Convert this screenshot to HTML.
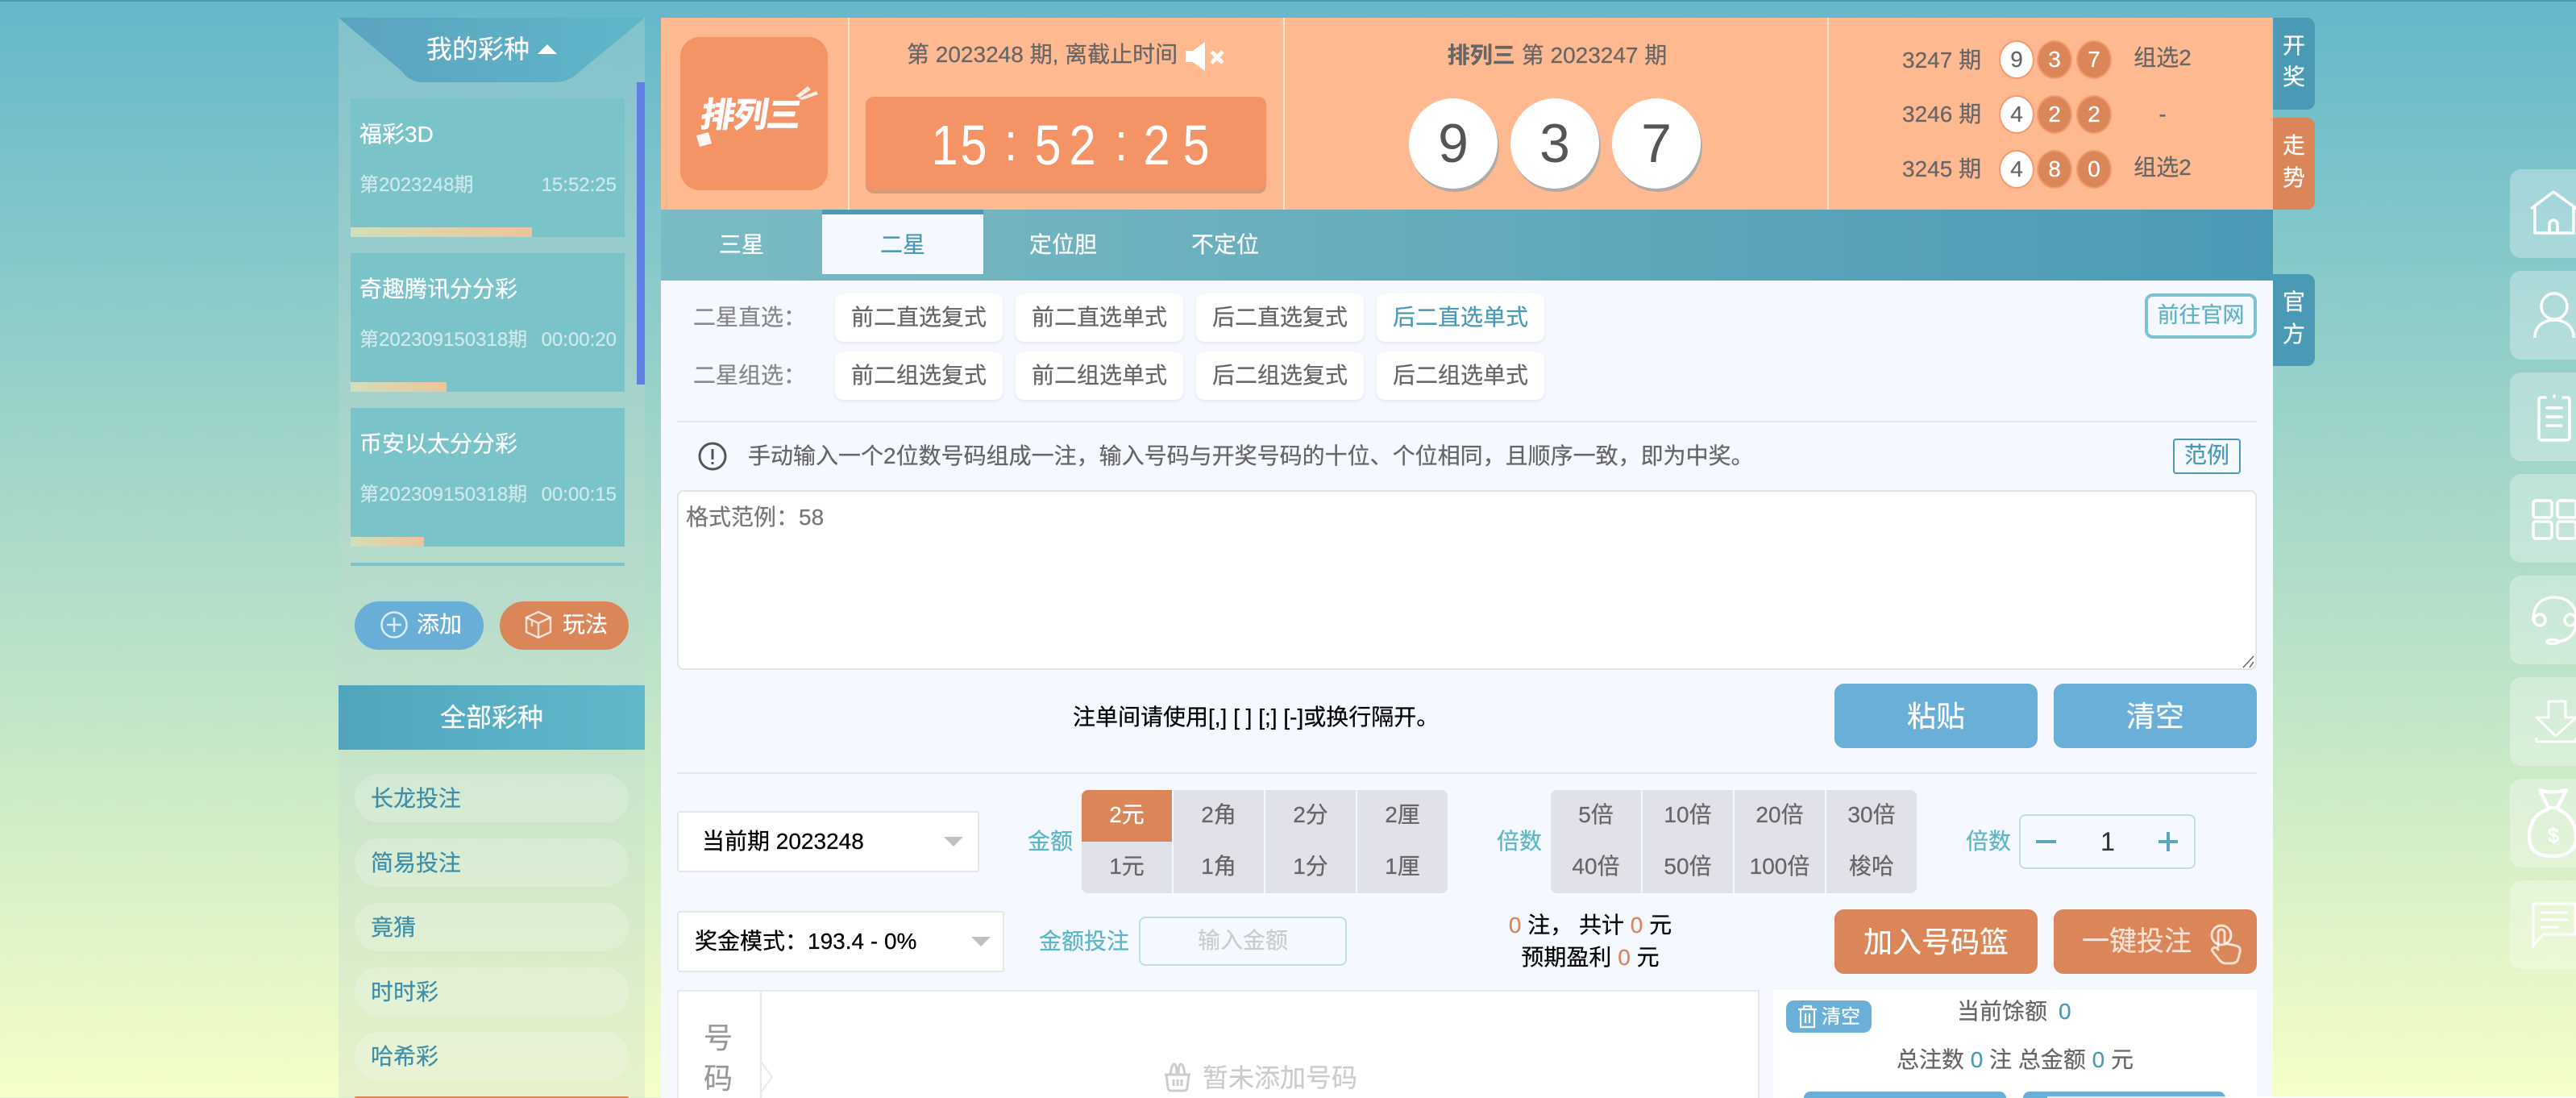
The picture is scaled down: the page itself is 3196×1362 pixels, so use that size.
<!DOCTYPE html>
<html lang="zh-CN"><head><meta charset="utf-8"><title>排列三</title>
<style>
*{box-sizing:border-box}
html,body{margin:0;padding:0;width:3196px;height:1362px;overflow:hidden}
body{position:relative;background:linear-gradient(#64b8cb,#f6ffc7);font-family:"Liberation Sans","Noto Sans CJK SC",sans-serif;font-size:28px;color:#666;-webkit-text-stroke:.25px}
.a,.t,.c{position:absolute}
.t,.c{white-space:nowrap;line-height:1}
.t{transform:translateY(-50%)}
.c{transform:translate(-50%,-50%)}
.led{transform:translate(-50%,-50%) scaleX(.85);-webkit-text-stroke:0}
.w{color:#fff}
.card{position:absolute;left:435px;width:340px;height:172px;background:#7ac3c8}
.bar{position:absolute;left:0;bottom:0;height:12px;background:linear-gradient(to right,#cfe0bb,#efc39b)}
.pill{position:absolute;left:440px;width:340px;height:60px;border-radius:30px;background:rgba(255,255,255,.2);color:#3f8eaa;line-height:61px;padding-left:20px}
.sub{position:absolute;width:208px;height:60px;background:#fff;border-radius:10px;box-shadow:0 2px 4px rgba(0,0,0,.07);text-align:center;line-height:60px;color:#666}
.tile{position:absolute;left:3114px;width:100px;height:110px;border-radius:14px;background:rgba(255,255,255,.3)}
.side{position:absolute;left:2820px;width:52px;height:114px;border-radius:0 10px 10px 0;color:#fff}
.cell{position:absolute;width:112px;height:64px;background:#e0e1e9;text-align:center;line-height:62px;color:#666}
.btn{position:absolute;height:80px;width:252px;border-radius:12px;color:#fff;font-size:36px;text-align:center;line-height:81px}
.blue{background:#6aafd7}.or{background:#db8659}
.rb{position:absolute;width:44px;height:48px;border-radius:50%;text-align:center;line-height:44px;border:2px solid #f29a6b}
.rb.wb{background:#fff;color:#666}.rb.ob{background:#db8659;color:#fff}
.lab{color:#5cb6c6}
.big{position:absolute;width:110px;height:112px;top:122px;border-radius:50%;background:#fff;box-shadow:2px 4px 0 #b2aaa5;color:#555;font-size:68px;text-align:center;line-height:112px;-webkit-text-stroke:0}
.sel{position:absolute;left:840px;background:#fff;border:2px solid #e5e6ea;border-radius:4px;color:#000}
.tri{position:absolute;width:0;height:0;border-left:12px solid transparent;border-right:12px solid transparent;border-top:12px solid #c0c0c0}
.div{position:absolute;left:840px;width:1960px;height:2px;background:#e6e7ec}
svg{position:absolute;overflow:visible}
.o{color:#db8659}.b{color:#4a9ab5}
</style></head><body>
<div class="a" style="left:0;top:0;width:3196px;height:2px;background:#4a9ab5"></div>

<!-- left sidebar -->
<div class="a" style="left:420px;top:22px;width:380px;height:1340px;background:rgba(195,215,210,.3)"></div>
<svg style="left:0;top:0" width="900" height="110"><defs><linearGradient id="g1" x1="0" y1="0" x2="1" y2="0"><stop offset="0" stop-color="#5ba3bf"/><stop offset="1" stop-color="#5fb6c9"/></linearGradient></defs><path d="M420 22H800L720 88Q706 102 690 102H524Q508 102 498 88Z" fill="url(#g1)"/></svg>
<div class="t w" style="left:529px;top:61px;font-size:32px">我的彩种</div>
<div class="a" style="left:667px;top:55px;width:0;height:0;border-left:12px solid transparent;border-right:12px solid transparent;border-bottom:12px solid #fff"></div>
<div class="a" style="left:790px;top:102px;width:10px;height:375px;background:#5f7fe5"></div>

<div class="card" style="top:122px"><div class="bar" style="width:225px"></div></div>
<div class="t w" style="left:446px;top:167px">福彩3D</div>
<div class="t" style="left:446px;top:230px;font-size:24px;color:rgba(255,255,255,.6)">第2023248期</div>
<div class="t" style="right:2431px;top:230px;font-size:24px;color:rgba(255,255,255,.6)">15:52:25</div>

<div class="card" style="top:314px"><div class="bar" style="width:119px"></div></div>
<div class="t w" style="left:446px;top:359px">奇趣腾讯分分彩</div>
<div class="t" style="left:446px;top:422px;font-size:24px;color:rgba(255,255,255,.6)">第202309150318期</div>
<div class="t" style="right:2431px;top:422px;font-size:24px;color:rgba(255,255,255,.6)">00:00:20</div>

<div class="card" style="top:506px"><div class="bar" style="width:91px"></div></div>
<div class="t w" style="left:446px;top:551px">币安以太分分彩</div>
<div class="t" style="left:446px;top:614px;font-size:24px;color:rgba(255,255,255,.6)">第202309150318期</div>
<div class="t" style="right:2431px;top:614px;font-size:24px;color:rgba(255,255,255,.6)">00:00:15</div>
<div class="a" style="left:435px;top:698px;width:340px;height:4px;background:#7ac3c8"></div>

<div class="a" style="left:440px;top:746px;width:160px;height:60px;border-radius:30px;background:#68aed6"></div>
<svg style="left:472px;top:758px" width="34" height="34" fill="none" stroke="#fff" stroke-opacity=".75" stroke-width="2.5"><circle cx="17" cy="17" r="15.5"/><path d="M8 17H26M17 8V26"/></svg>
<div class="t w" style="left:517px;top:775px">添加</div>
<div class="a" style="left:620px;top:746px;width:160px;height:60px;border-radius:30px;background:#db8659"></div>
<svg style="left:651px;top:757px" width="34" height="36" fill="none" stroke="#fff" stroke-opacity=".75" stroke-width="2.5" stroke-linejoin="round"><path d="M17 2L32 9V27L17 34L2 27V9Z"/><path d="M2 9L17 16L32 9M17 16V34M9 12.5V20"/></svg>
<div class="t w" style="left:698px;top:775px">玩法</div>

<div class="a" style="left:420px;top:850px;width:380px;height:80px;background:linear-gradient(to right,#50a5bd,#61b8ca)"></div>
<div class="c w" style="left:610px;top:890px;font-size:32px">全部彩种</div>
<div class="pill" style="top:960px">长龙投注</div>
<div class="pill" style="top:1040px">简易投注</div>
<div class="pill" style="top:1120px">竟猜</div>
<div class="pill" style="top:1200px">时时彩</div>
<div class="pill" style="top:1280px">哈希彩</div>
<div class="a" style="left:440px;top:1360px;width:340px;height:2px;background:#db8659;border-radius:2px 2px 0 0"></div>

<!-- header -->
<div class="a" style="left:820px;top:22px;width:2000px;height:238px;background:#ffb991"></div>
<div class="a" style="left:1052px;top:22px;width:2px;height:238px;background:#fbe6d8"></div>
<div class="a" style="left:1592px;top:22px;width:2px;height:238px;background:#fbe6d8"></div>
<div class="a" style="left:2267px;top:22px;width:2px;height:238px;background:#fbe6d8"></div>

<div class="a" style="left:844px;top:46px;width:183px;height:190px;border-radius:24px;background:#f49365"></div>
<div class="t w" style="left:870px;top:143px;font-size:42px;font-weight:700;letter-spacing:-1px;transform:translateY(-50%) skewX(-9deg);-webkit-text-stroke:1px #fff">排列三</div>
<svg style="left:860px;top:100px" width="160" height="90" fill="#fff"><path d="M127 19L142 7L146 11L132 21Z M131 22L153 13L155 17L135 24Z" fill-opacity=".85"/><path d="M4 68L19 64L23 78L8 82Z" fill-opacity=".9"/></svg>

<div class="t" style="left:1125px;top:68px">第 2023248 期, 离截止时间</div>
<svg style="left:1471px;top:52px" width="50" height="36" fill="#fff"><path d="M0 11H9L24 0V36L9 25H0Z"/><path d="M32 12L46 26M46 12L32 26" stroke="#fff" stroke-width="5" fill="none"/></svg>

<div class="a" style="left:1074px;top:120px;width:497px;height:116px;border-radius:10px;background:#f49365;box-shadow:0 4px 0 #d69a78"></div>
<div class="c w led" style="left:1172px;top:180px;font-size:70px">1</div>
<div class="c w led" style="left:1208px;top:180px;font-size:70px">5</div>
<div class="c w led" style="left:1254px;top:176px;font-size:66px">:</div>
<div class="c w led" style="left:1300px;top:180px;font-size:70px">5</div>
<div class="c w led" style="left:1343px;top:180px;font-size:70px">2</div>
<div class="c w led" style="left:1391px;top:176px;font-size:66px">:</div>
<div class="c w led" style="left:1435px;top:180px;font-size:70px">2</div>
<div class="c w led" style="left:1484px;top:180px;font-size:70px">5</div>

<div class="c" style="left:1932px;top:69px"><b>排列三</b><span style="margin-left:8px">第 2023247 期</span></div>
<div class="big" style="left:1748px">9</div>
<div class="big" style="left:1874px">3</div>
<div class="big" style="left:2000px">7</div>

<div class="t" style="left:2360px;top:75px">3247 期</div>
<div class="rb wb" style="left:2480px;top:50px">9</div><div class="rb ob" style="left:2527px;top:50px">3</div><div class="rb ob" style="left:2576px;top:50px">7</div>
<div class="c" style="left:2683px;top:72px">组选2</div>
<div class="t" style="left:2360px;top:142px">3246 期</div>
<div class="rb wb" style="left:2480px;top:118px">4</div><div class="rb ob" style="left:2527px;top:118px">2</div><div class="rb ob" style="left:2576px;top:118px">2</div>
<div class="c" style="left:2683px;top:142px">-</div>
<div class="t" style="left:2360px;top:210px">3245 期</div>
<div class="rb wb" style="left:2480px;top:186px">4</div><div class="rb ob" style="left:2527px;top:186px">8</div><div class="rb ob" style="left:2576px;top:186px">0</div>
<div class="c" style="left:2683px;top:208px">组选2</div>

<!-- side tabs -->
<div class="side" style="top:22px;background:#4a9ab5"></div>
<div class="c w" style="left:2846px;top:57px">开</div><div class="c w" style="left:2846px;top:96px">奖</div>
<div class="side" style="top:146px;background:#db8659"></div>
<div class="c w" style="left:2846px;top:181px">走</div><div class="c w" style="left:2846px;top:221px">势</div>
<div class="side" style="top:340px;background:#4a9ab5"></div>
<div class="c w" style="left:2846px;top:375px">官</div><div class="c w" style="left:2846px;top:415px">方</div>

<!-- tabs -->
<div class="a" style="left:820px;top:260px;width:2000px;height:88px;background:linear-gradient(to right,#7bbbc3,#4b9ab5)"></div>
<div class="a" style="left:1020px;top:260px;width:200px;height:80px;background:#f5f8ff;border-top:6px solid #4a9ab5"></div>
<div class="c w" style="left:920px;top:304px">三星</div>
<div class="c b" style="left:1120px;top:304px">二星</div>
<div class="c w" style="left:1319px;top:304px">定位胆</div>
<div class="c w" style="left:1520px;top:304px">不定位</div>

<!-- body -->
<div class="a" style="left:820px;top:348px;width:2000px;height:1014px;background:#f5f8ff"></div>
<div class="t" style="left:860px;top:394px;color:#888">二星直选：</div>
<div class="t" style="left:860px;top:466px;color:#888">二星组选：</div>
<div class="sub" style="left:1036px;top:364px">前二直选复式</div>
<div class="sub" style="left:1260px;top:364px">前二直选单式</div>
<div class="sub" style="left:1484px;top:364px">后二直选复式</div>
<div class="sub b" style="left:1708px;top:364px;color:#4a9ab5">后二直选单式</div>
<div class="sub" style="left:1036px;top:436px">前二组选复式</div>
<div class="sub" style="left:1260px;top:436px">前二组选单式</div>
<div class="sub" style="left:1484px;top:436px">后二组选复式</div>
<div class="sub" style="left:1708px;top:436px">后二组选单式</div>
<div class="a" style="left:2661px;top:364px;width:139px;height:56px;border:4px solid #7fc0d2;border-radius:10px;color:#5fb4c4;text-align:center;line-height:46px;font-size:27px;white-space:nowrap">前往官网</div>

<div class="div" style="top:522px"></div>
<svg style="left:866px;top:548px" width="36" height="36" fill="none" stroke="#555" stroke-width="3"><circle cx="18" cy="18" r="16"/><path d="M18 9V22M18 25V28"/></svg>
<div class="t" style="left:928px;top:566px">手动输入一个2位数号码组成一注，输入号码与开奖号码的十位、个位相同，且顺序一致，即为中奖。</div>
<div class="a" style="left:2696px;top:544px;width:84px;height:44px;border:2px solid #4a9ab5;border-radius:4px;color:#4a9ab5;text-align:center;line-height:38px">范例</div>

<div class="a" style="left:840px;top:608px;width:1960px;height:223px;background:#fff;border:2px solid #e3e4ea;border-radius:8px"></div>
<div class="t" style="left:851px;top:642px;color:#777">格式范例：58</div>
<svg style="left:2782px;top:814px" width="16" height="16" fill="none" stroke="#666" stroke-width="1.5"><path d="M1 14L14 0M9 14L14 7"/></svg>

<div class="t" style="left:1331px;top:890px;color:#000">注单间请使用[,] [ ] [;] [-]或换行隔开。</div>
<div class="btn blue" style="left:2276px;top:848px">粘贴</div>
<div class="btn blue" style="left:2548px;top:848px">清空</div>
<div class="div" style="top:958px"></div>

<div class="sel" style="top:1006px;width:375px;height:76px"></div>
<div class="t" style="left:871px;top:1044px;color:#000">当前期 2023248</div>
<div class="tri" style="left:1171px;top:1038px"></div>
<div class="t lab" style="left:1275px;top:1044px">金额</div>

<div class="cell" style="left:1342px;top:980px;background:#db8659;color:#fff;border-top-left-radius:8px">2元</div>
<div class="cell" style="left:1456px;top:980px">2角</div>
<div class="cell" style="left:1570px;top:980px">2分</div>
<div class="cell" style="left:1684px;top:980px;border-top-right-radius:8px">2厘</div>
<div class="cell" style="left:1342px;top:1044px;border-bottom-left-radius:8px">1元</div>
<div class="cell" style="left:1456px;top:1044px">1角</div>
<div class="cell" style="left:1570px;top:1044px">1分</div>
<div class="cell" style="left:1684px;top:1044px;border-bottom-right-radius:8px">1厘</div>

<div class="t lab" style="left:1857px;top:1044px">倍数</div>
<div class="cell" style="left:1924px;top:980px;border-top-left-radius:8px">5倍</div>
<div class="cell" style="left:2038px;top:980px">10倍</div>
<div class="cell" style="left:2152px;top:980px">20倍</div>
<div class="cell" style="left:2266px;top:980px;border-top-right-radius:8px">30倍</div>
<div class="cell" style="left:1924px;top:1044px;border-bottom-left-radius:8px">40倍</div>
<div class="cell" style="left:2038px;top:1044px">50倍</div>
<div class="cell" style="left:2152px;top:1044px">100倍</div>
<div class="cell" style="left:2266px;top:1044px;border-bottom-right-radius:8px">梭哈</div>

<div class="t lab" style="left:2439px;top:1044px">倍数</div>
<div class="a" style="left:2505px;top:1010px;width:219px;height:68px;border:2px solid #bfdde8;border-radius:8px"></div>
<div class="a" style="left:2526px;top:1042px;width:25px;height:4px;background:#5aa6bd"></div>
<div class="a" style="left:2678px;top:1042px;width:24px;height:4px;background:#5aa6bd"></div>
<div class="a" style="left:2688px;top:1032px;width:4px;height:24px;background:#5aa6bd"></div>
<div class="c" style="left:2615px;top:1044px;font-size:32px;color:#333">1</div>

<div class="sel" style="top:1130px;width:406px;height:76px"></div>
<div class="t" style="left:862px;top:1168px;color:#000">奖金模式：193.4 - 0%</div>
<div class="tri" style="left:1205px;top:1162px"></div>
<div class="t lab" style="left:1289px;top:1168px">金额投注</div>
<div class="a" style="left:1413px;top:1137px;width:258px;height:61px;border:2px solid #bfdde8;border-radius:8px;color:#ccc;text-align:center;line-height:55px">输入金额</div>

<div class="c" style="left:1973px;top:1148px;color:#000"><span class="o">0</span> 注， 共计 <span class="o">0</span> 元</div>
<div class="c" style="left:1973px;top:1188px;color:#000">预期盈利 <span class="o">0</span> 元</div>
<div class="btn or" style="left:2276px;top:1128px">加入号码篮</div>
<div class="btn or" style="left:2548px;top:1128px"></div>
<div class="t" style="left:2583px;top:1168px;font-size:34px;color:rgba(255,255,255,.75)">一键投注</div>
<svg style="left:2742px;top:1146px" width="40" height="50" fill="none" stroke="#fff" stroke-opacity=".75" stroke-width="3" stroke-linecap="round" stroke-linejoin="round"><circle cx="14" cy="14" r="12"/><path d="M10 28V11a4 4 0 0 1 8 0V24L32 27C36 28 38 30 37 35L35 43C34 47 31 49 26 49H20C16 49 13 47 11 44L3 34C1 31 5 28 8 30L10 32"/></svg>

<!-- basket -->
<div class="a" style="left:840px;top:1228px;width:1343px;height:134px;background:#fff;border:2px solid #e8e8ee;border-bottom:0"></div>
<div class="a" style="left:943px;top:1230px;width:2px;height:132px;background:#e8e8ee"></div>
<svg style="left:943px;top:1316px" width="18" height="40" fill="#fff" stroke="#e8e8ee" stroke-width="2"><path d="M1 1L15 20L1 39Z"/></svg>
<div class="c" style="left:891px;top:1288px;font-size:36px;color:#999">号</div>
<div class="c" style="left:891px;top:1338px;font-size:36px;color:#999">码</div>
<svg style="left:1444px;top:1318px" width="34" height="36" fill="none" stroke="#ccc" stroke-width="3" stroke-linejoin="round"><path d="M1 15H33M3 15L5 31Q5.5 35 10 35H24Q28.5 35 29 31L31 15M8 15C9 8 10 2 13 2C15 2 16 8 16 15M26 15C25 8 24 2 21 2C19 2 18 8 18 15M12 21V29M17 21V29M22 21V29"/></svg>
<div class="t" style="left:1492px;top:1337px;font-size:32px;color:#ccc">暂未添加号码</div>

<div class="a" style="left:2200px;top:1228px;width:600px;height:134px;background:#fff"></div>
<div class="a" style="left:2216px;top:1241px;width:106px;height:40px;border-radius:10px;background:#6aafd7"></div>
<svg style="left:2230px;top:1246px" width="25" height="30" fill="none" stroke="#fff" stroke-width="2.2"><path d="M1 6H24M8 6V2H17V6M4 6V28H21V6M10 11V23M15 11V23"/></svg>
<div class="t w" style="left:2260px;top:1262px;font-size:24px">清空</div>
<div class="t" style="left:2428px;top:1255px">当前馀额<span class="b" style="margin-left:14px">0</span></div>
<div class="c" style="left:2500px;top:1315px">总注数 <span class="b">0</span> 注 总金额 <span class="b">0</span> 元</div>
<div class="a" style="left:2238px;top:1354px;width:251px;height:8px;border-radius:12px 12px 0 0;background:#6aafd7"></div>
<div class="a" style="left:2510px;top:1354px;width:251px;height:8px;border-radius:12px 12px 0 0;background:#6aafd7"></div>
<div class="a" style="left:2540px;top:1360px;width:656px;height:2px;background:rgba(255,255,255,.75)"></div>

<!-- right rail -->
<div class="tile" style="top:210px"></div>
<div class="tile" style="top:336px"></div>
<div class="tile" style="top:462px"></div>
<div class="tile" style="top:588px"></div>
<div class="tile" style="top:714px"></div>
<div class="tile" style="top:840px"></div>
<div class="tile" style="top:966px"></div>
<div class="tile" style="top:1092px"></div>

<svg style="left:3139px;top:237px" width="60" height="54" fill="none" stroke="#fff" stroke-width="3.5" stroke-linejoin="round"><path d="M1 22L29 1L58 22"/><path d="M6 20V52H54V20"/><path d="M24 52V41a5 5 0 0 1 10 0V52"/></svg>
<svg style="left:3143px;top:362px" width="54" height="60" fill="none" stroke="#fff" stroke-width="3.5"><circle cx="26" cy="18" r="16"/><path d="M2 57C2 42 13 35 26 35C39 35 50 42 50 57"/></svg>
<svg style="left:3148px;top:488px" width="44" height="60" fill="none" stroke="#fff" stroke-width="3.5" stroke-linecap="round"><path d="M10 5H5Q2 5 2 8V54Q2 58 6 58H36Q40 58 40 54V8Q40 5 37 5H32"/><path d="M21 3V4M12 18H30M12 29H30M12 40H30"/></svg>
<svg style="left:3141px;top:619px" width="60" height="52" fill="none" stroke="#fff" stroke-width="3.5"><rect x="2" y="2" width="23" height="21" rx="3"/><rect x="32" y="2" width="23" height="21" rx="3"/><rect x="2" y="28" width="23" height="21" rx="3"/><rect x="32" y="28" width="23" height="21" rx="3"/></svg>
<svg style="left:3141px;top:739px" width="60" height="62" fill="none" stroke="#fff" stroke-width="3.5" stroke-linecap="round"><path d="M2 30C2 10 14 2 28 2C42 2 56 10 56 30"/><rect x="3" y="23" width="14" height="14" rx="7"/><rect x="41" y="23" width="14" height="14" rx="7"/><path d="M55 37C52 50 44 56 32 57"/><ellipse cx="26" cy="57" rx="7" ry="2.5"/></svg>
<svg style="left:3146px;top:869px" width="54" height="54" fill="none" stroke="#fff" stroke-width="3" stroke-linejoin="round"><path d="M16 1H37V21H50L25 44L1 21H16Z"/><path d="M1 46V51H50V46"/></svg>
<svg style="left:3136px;top:977px" width="62" height="90" fill="none" stroke="#fff" stroke-width="4.5" stroke-linejoin="round"><path d="M15 3C24 6 36 6 48 3L37 25H26Z"/><path d="M26 27C10 31 2 44 2 62C2 80 16 85 31 85C46 85 60 80 60 62C60 44 50 31 37 27"/></svg>
<div class="c" style="left:3168px;top:1036px;font-size:26px;font-weight:700;color:#fff">$</div>
<svg style="left:3141px;top:1119px" width="60" height="58" fill="none" stroke="#fff" stroke-width="3"><path d="M2 2H54V40H14L2 54Z"/><path d="M11 13H45M11 22H45M11 31H33"/></svg>
</body></html>
